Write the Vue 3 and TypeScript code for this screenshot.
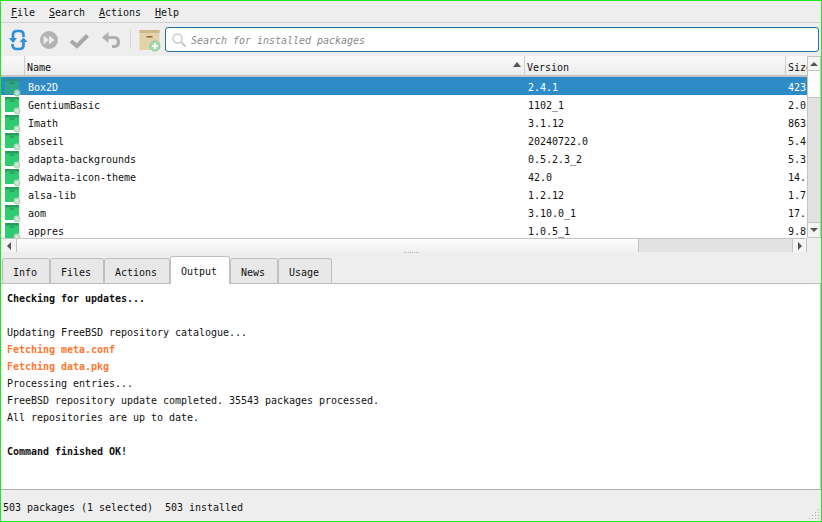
<script setup lang="ts">
interface Pkg { name: string; version: string; size: string }
const menus: { key: string; rest: string }[] = [
  { key: 'F', rest: 'ile' },
  { key: 'S', rest: 'earch' },
  { key: 'A', rest: 'ctions' },
  { key: 'H', rest: 'elp' },
]
const pkgs: Pkg[] = [
  { name: 'Box2D', version: '2.4.1', size: '423' },
  { name: 'GentiumBasic', version: '1102_1', size: '2.0' },
  { name: 'Imath', version: '3.1.12', size: '863' },
  { name: 'abseil', version: '20240722.0', size: '5.4' },
  { name: 'adapta-backgrounds', version: '0.5.2.3_2', size: '5.3' },
  { name: 'adwaita-icon-theme', version: '42.0', size: '14.' },
  { name: 'alsa-lib', version: '1.2.12', size: '1.7' },
  { name: 'aom', version: '3.10.0_1', size: '17.' },
  { name: 'appres', version: '1.0.5_1', size: '9.8' },
]
const tabs = ['Info', 'Files', 'Actions', 'Output', 'News', 'Usage']
const lines: { text: string; kind: string }[] = [
  { text: 'Checking for updates...', kind: 'bold' },
  { text: '', kind: '' },
  { text: 'Updating FreeBSD repository catalogue...', kind: '' },
  { text: 'Fetching meta.conf', kind: 'warn' },
  { text: 'Fetching data.pkg', kind: 'warn' },
  { text: 'Processing entries...', kind: '' },
  { text: 'FreeBSD repository update completed. 35543 packages processed.', kind: '' },
  { text: 'All repositories are up to date.', kind: '' },
  { text: '', kind: '' },
  { text: 'Command finished OK!', kind: 'bold' },
]
const grip: [number, number][] = [[9, 0], [6, 3], [9, 3], [3, 6], [6, 6], [9, 6], [0, 9], [3, 9], [6, 9], [9, 9]]
</script>

<template>
  <div class="win">
    <div class="menubar">
      <span v-for="m in menus" :key="m.key" class="menu"><u>{{ m.key }}</u>{{ m.rest }}</span>
    </div>

    <div class="toolbar">
      <svg class="tool" width="24" height="24" viewBox="0 0 24 24" fill="none">
        <path d="M7 10V7C7 4.5 8.5 3 11 3H13.5C16 3 17.5 4.5 17.5 7V9" stroke="#2e8fd6" stroke-width="2.7" />
        <path d="M17.5 14V17C17.5 19.5 16 21 13.5 21H10.5C8.5 21 6.5 19.5 6.5 17V16" stroke="#2e8fd6" stroke-width="2.7" />
        <path d="M3 10H11L7 15Z M13.5 14H21.5L17.5 9.5Z" fill="#2e8fd6" />
      </svg>
      <svg class="tool" width="24" height="24" viewBox="0 0 24 24">
        <circle cx="12" cy="12" r="9" fill="#b3b3b3" />
        <path d="M6.5 7.5L12 12L6.5 16.5Z M12 7.5L17.5 12L12 16.5Z" fill="#ececec" />
      </svg>
      <svg class="tool" width="24" height="24" viewBox="0 0 24 24" fill="none">
        <path d="M3 13L9 18L19.5 7.5" stroke="#a8a8a8" stroke-width="4.2" />
      </svg>
      <svg class="tool" width="24" height="24" viewBox="0 0 24 24" fill="none">
        <path d="M3 9.5L9.5 4V15Z" fill="#b0b0b0" />
        <path d="M8 9.5H15C18 9.5 19.5 11.5 19.5 14C19.5 16.5 18 18.5 15 18.5H13" stroke="#b0b0b0" stroke-width="3.2" />
      </svg>
      <div class="sep"></div>
      <svg class="box" width="24" height="24" viewBox="0 0 24 24">
        <rect x="0.5" y="2" width="20" height="20" fill="#e3d3ab" />
        <rect x="0.5" y="2" width="20" height="3" fill="#cdb98c" />
        <rect x="7.5" y="8" width="6" height="1.6" fill="#a5663f" />
        <circle cx="16" cy="18" r="5" fill="#a8dcb2" stroke="#8ec79b" />
        <path d="M16 15V21M13 18H19" stroke="#fff" stroke-width="1.6" />
      </svg>
      <label class="search">
        <svg width="16" height="16" viewBox="0 0 16 16" fill="none">
          <circle cx="6.5" cy="6.5" r="4.5" stroke="#c8c8c8" stroke-width="1.4" />
          <path d="M10 10L14.5 14.5" stroke="#c8c8c8" stroke-width="2" />
        </svg>
        <span class="ph">Search for installed packages</span>
      </label>
    </div>

    <div class="table">
      <div class="tmain">
        <div class="thead">
          <div class="hc c0"></div>
          <div class="hc c1">Name<i class="sort"></i></div>
          <div class="hc c2">Version</div>
          <div class="hc c3">Size</div>
        </div>
        <div class="rows">
          <div v-for="(p, i) in pkgs" :key="p.name" class="row" :class="{ sel: i === 0 }">
            <div class="c0 ic">
              <svg width="18" height="18" viewBox="0 0 18 18">
                <rect x="0" y="0" width="14" height="15" :fill="i === 0 ? '#2fa78a' : '#2ecc71'" />
                <rect x="0" y="0" width="14" height="2.5" :fill="i === 0 ? '#2b9478' : '#2a9d5e'" />
                <rect x="4.5" y="3.5" width="5" height="1" fill="#2c7a50" />
                <circle cx="12" cy="14" r="3.4" :fill="i === 0 ? '#8fcdb9' : '#b4d8bf'" />
                <path d="M12 12V16M10 14H14" :stroke="i === 0 ? '#cfe6de' : '#dcebe0'" stroke-width="1.2" />
              </svg>
            </div>
            <div class="c1 td">{{ p.name }}</div>
            <div class="c2 td">{{ p.version }}</div>
            <div class="c3 td">{{ p.size }}</div>
          </div>
        </div>
        <div class="hbar">
          <div class="sbtn"><i class="tri left"></i></div>
          <div class="hthumb"></div>
          <div class="htrack"></div>
          <div class="sbtn end"><i class="tri right"></i></div>
        </div>
      </div>
      <div class="vbar">
        <div class="vbtn"><i class="tri up"></i></div>
        <div class="vthumb"></div>
        <div class="vtrack"></div>
        <div class="vbtn bot"><i class="tri down"></i></div>
      </div>
    </div>

    <div class="splitter"><i v-for="n in 8" :key="n"></i></div>

    <div class="tabs">
      <div v-for="t in tabs" :key="t" class="tab" :class="{ on: t === 'Output' }">{{ t }}</div>
    </div>

    <div class="output">
      <div v-for="(l, i) in lines" :key="i" class="line" :class="l.kind">{{ l.text }}</div>
    </div>

    <div class="status">
      <span>503 packages (1 selected)&nbsp;&nbsp;503 installed</span>
      <svg class="grip" width="10" height="10" viewBox="0 0 10 10">
        <rect v-for="(g, i) in grip" :key="i" :x="g[0]" :y="g[1]" width="1" height="1" fill="#a8a8a8" />
      </svg>
    </div>
  </div>
</template>

<style scoped>
.win {
  width: 822px;
  height: 522px;
  box-sizing: border-box;
  border: 1px solid #22e622;
  background: #eeeeee;
  font: 10px "DejaVu Sans Mono", monospace;
  letter-spacing: -0.02px;
  color: #111;
  display: flex;
  flex-direction: column;
  overflow: hidden;
}
.menubar {
  height: 22px;
  display: flex;
  align-items: center;
  padding: 2px 0 0 10px;
  box-sizing: border-box;
  gap: 14px;
  border-bottom: 1px solid #d2d2d2;
  flex: none;
}
.toolbar {
  height: 33px;
  flex: none;
  display: flex;
  align-items: center;
  padding-left: 5px;
  box-sizing: border-box;
}
.tool { flex: none; margin-right: 7px; }
.sep { width: 1px; height: 19px; background: #d8d8d8; margin-right: 8px; flex: none; }
.box { flex: none; margin-right: 2px; }
.search {
  width: 654px;
  height: 25px;
  box-sizing: border-box;
  border: 1px solid #2a6f9f;
  border-radius: 3px;
  background: #fff;
  display: flex;
  align-items: center;
  gap: 4px;
  padding-left: 5px;
  color: #8a8a8a;
  font-style: italic;
  flex: none;
}
.ph { padding-top: 1px; }
.table { display: flex; height: 196px; flex: none; }
.tmain { width: 806px; flex: none; overflow: hidden; }
.thead {
  height: 21px;
  box-sizing: border-box;
  display: flex;
  background: linear-gradient(#fafafa, #ececec);
  border-bottom: 2px solid #c4c4c4;
}
.hc {
  display: flex;
  align-items: center;
  box-sizing: border-box;
  padding: 3px 0 0 2px;
  position: relative;
  height: 19px;
}
.hc + .hc { border-left: 1px solid #cfcfcf; }
.c0 { width: 23px; flex: none; }
.c1 { width: 500px; flex: none; }
.c2 { width: 261px; flex: none; }
.c3 { width: 22px; flex: none; overflow: hidden; white-space: nowrap; }
.sort {
  position: absolute;
  right: 3px;
  top: 6px;
  border: 4px solid transparent;
  border-top: 0;
  border-bottom: 5px solid #555;
}
.rows { height: 161px; overflow: hidden; background: #fff; }
.row { height: 18px; box-sizing: border-box; padding-top: 2px; display: flex; align-items: center; }
.row.sel { background: #2e8bc6; color: #fff; }
.ic { align-self: flex-start; height: 16px; padding-left: 4px; box-sizing: border-box; position: relative; }
.ic svg { display: block; }
.td { padding-left: 4px; box-sizing: border-box; }
.c3.td { padding-left: 3px; }
.hbar {
  display: flex;
  border-top: 1px solid #c4c4c4;
  border-bottom: 1px solid #c4c4c4;
  background: #e2e2e2;
  height: 13px;
}
.sbtn {
  width: 16px;
  flex: none;
  background: #f4f4f4;
  display: flex;
  align-items: center;
  justify-content: center;
  border-right: 1px solid #c4c4c4;
  box-sizing: border-box;
}
.sbtn.end { width: 15px; border-left: 1px solid #c4c4c4; }
.hthumb {
  width: 622px;
  flex: none;
  box-sizing: border-box;
  background: linear-gradient(#fdfdfd, #f1f1f1);
  border-right: 1px solid #c4c4c4;
}
.htrack { flex: 1; }
.vbar {
  width: 14px;
  height: 182px;
  flex: none;
  display: flex;
  flex-direction: column;
  background: #e2e2e2;
  border: 1px solid #c4c4c4;
  box-sizing: border-box;
}
.vbtn {
  height: 14px;
  flex: none;
  box-sizing: border-box;
  background: #f4f4f4;
  display: flex;
  align-items: center;
  justify-content: center;
  border-bottom: 1px solid #c4c4c4;
}
.vbtn.bot { border-top: 1px solid #c4c4c4; border-bottom: 0; height: 15px; }
.vthumb { height: 26px; flex: none; background: #fbfbfb; border-bottom: 1px solid #c4c4c4; }
.vtrack { flex: 1; }
.tri { display: block; width: 0; height: 0; border: 4px solid transparent; }
.tri.up { border-top: 0; border-bottom: 4px solid #555; }
.tri.down { border-bottom: 0; border-top: 4px solid #555; }
.tri.left { border-left: 0; border-right: 4px solid #555; }
.tri.right { border-right: 0; border-left: 4px solid #555; }
.splitter { height: 4px; flex: none; display: flex; justify-content: center; gap: 1px; align-items: flex-start; }
.splitter i { width: 1px; height: 1px; background: #b4b4b4; display: block; }
.tabs {
  height: 27px;
  flex: none;
  display: flex;
  align-items: flex-start;
  padding-left: 1px;
  position: relative;
  z-index: 1;
}
.tab {
  height: 25px;
  margin-top: 2px;
  box-sizing: border-box;
  padding: 2px 12px 0 10px;
  display: flex;
  align-items: center;
  background: #e8e8e8;
  border: 1px solid #c0c0c0;
  border-bottom: 0;
  border-radius: 3px 3px 0 0;
}
.tab.on { height: 28px; margin-top: 0; background: #fff; }
.output {
  height: 207px;
  flex: none;
  box-sizing: border-box;
  background: #fff;
  border: 1px solid #bdbdbd;
  border-left-width: 0;
  border-bottom-color: #b0b0b0;
  padding: 6px 0 0 6px;
}
.line { height: 17px; line-height: 17px; white-space: pre; }
.line.bold { font-weight: bold; }
.line.warn { font-weight: bold; color: #ff7733; }
.status {
  flex: 1;
  display: flex;
  align-items: center;
  padding: 3px 0 0 2px;
  position: relative;
}
.grip { position: absolute; right: 2px; bottom: 2px; }
</style>
<style>
html, body { background: #eee; overflow: hidden; }
</style>
